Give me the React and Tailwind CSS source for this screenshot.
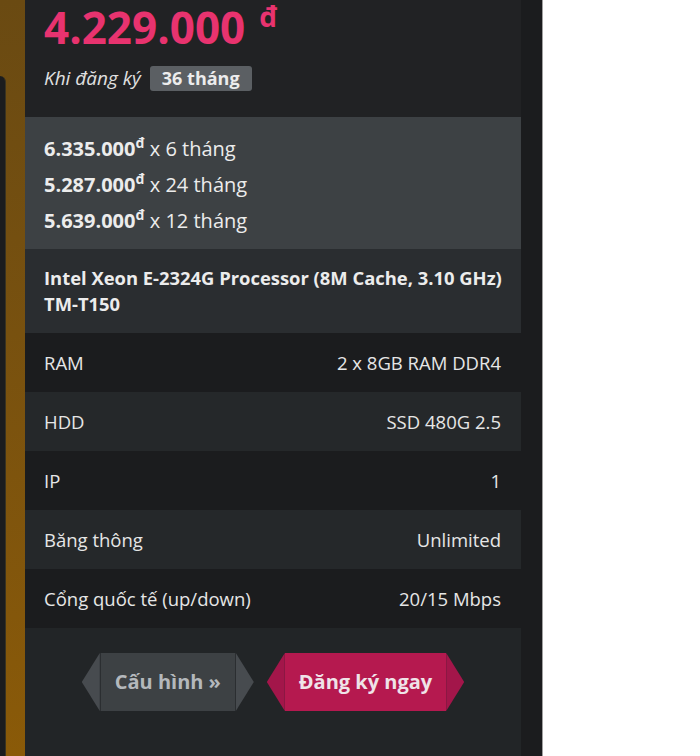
import React from "react";

const font = { fontFamily: '"Open Sans", "Noto Sans", sans-serif' };

function Row({ label, value, dark }) {
  return (
    <div className={`flex h-[59px] items-center justify-between pl-[19px] pr-[20px] text-[18.5px] text-[#e6e6e6] ${dark ? "bg-[#1b1c1e]" : "bg-[#25282a]"}`}>
      <span>{label}</span>
      <span>{value}</span>
    </div>
  );
}

function ArrowButton({ children, tri, body, text }) {
  return (
    <div className="flex h-[58px]">
      <div className={`w-[18px] h-full ${tri} [clip-path:polygon(100%_0,100%_100%,0_50%)]`} />
      <div className={`flex h-full items-center whitespace-nowrap text-[20px] font-bold ${body} ${text}`}>
        {children}
      </div>
      <div className={`w-[18px] h-full ${tri} [clip-path:polygon(0_0,100%_50%,0_100%)]`} />
    </div>
  );
}

export default function App() {
  return (
    <div className="flex w-[700px] h-[756px] overflow-hidden bg-white" style={font}>
      <div className="flex w-[543px] h-full bg-[#1b1c1e] border-r border-[#a0a0a0]">
        <div className="w-[25px] h-full bg-gradient-to-b from-[#6a4a12] to-[#8a5a08] flex">
          <div className="mt-[76px] w-[6px] h-full bg-[#1b1c1e] rounded-tr-[6px] border-r border-[#3a3320]" />
        </div>
        <div className="w-[496px] h-full flex flex-col">
          <div className="bg-[#212224] h-[117px] pl-[19px] pt-[1px]">
            <div className="flex items-start text-[#e8336f] font-bold leading-[53px]">
              <span className="text-[44px]">4.229.000</span>
              <span className="text-[28px] leading-[28px] ml-[14px] mt-[1px]">đ</span>
            </div>
            <div className="flex items-center mt-[10px]">
              <span className="italic text-[19px] text-[#e0e0e0]">Khi đăng ký</span>
              <span className="ml-[9px] h-[25px] px-[12px] rounded-[3px] bg-[#5b5f63] text-[#ececec] font-bold text-[18px] leading-[25px]">36 tháng</span>
            </div>
          </div>
          <div className="bg-[#3d4144] h-[132px] pl-[19px] pt-[14px] text-[20px] leading-[36px] text-[#ececec]">
            {[
              ["6.335.000", "6"],
              ["5.287.000", "24"],
              ["5.639.000", "12"],
            ].map(([p, m]) => (
              <div key={p} className="whitespace-nowrap">
                <span className="font-bold">{p}</span>
                <span className="inline-block font-bold text-[14px] leading-none relative top-[-8px]">đ</span>
                <span> x {m} tháng</span>
              </div>
            ))}
          </div>
          <div className="bg-[#2a2d30] h-[84px] pl-[19px] pr-[10px] pt-[16px] text-[18.4px] font-bold leading-[26px] text-[#ececec] whitespace-nowrap">
            Intel Xeon E-2324G Processor (8M Cache, 3.10 GHz)
            <br />
            TM-T150
          </div>
          <Row label="RAM" value="2 x 8GB RAM DDR4" dark />
          <Row label="HDD" value="SSD 480G 2.5" />
          <Row label="IP" value="1" dark />
          <Row label="Băng thông" value="Unlimited" />
          <Row label="Cổng quốc tế (up/down)" value="20/15 Mbps" dark />
          <div className="flex-1 bg-[#222527] flex justify-center gap-[13px] pt-[25px]">
            <ArrowButton tri="bg-[#474b4f]" body="bg-[#3d4144] px-[14px] border-x border-[#2b2e31]" text="text-[#b4b8bc]">
              Cấu hình <span className="ml-[5px]">»</span>
            </ArrowButton>
            <ArrowButton tri="bg-[#a3164a]" body="bg-[#b5194f] px-[14px]" text="text-[#efe3e8]">
              Đăng ký ngay
            </ArrowButton>
          </div>
        </div>
      </div>
      <div className="flex-1 bg-white" />
    </div>
  );
}
